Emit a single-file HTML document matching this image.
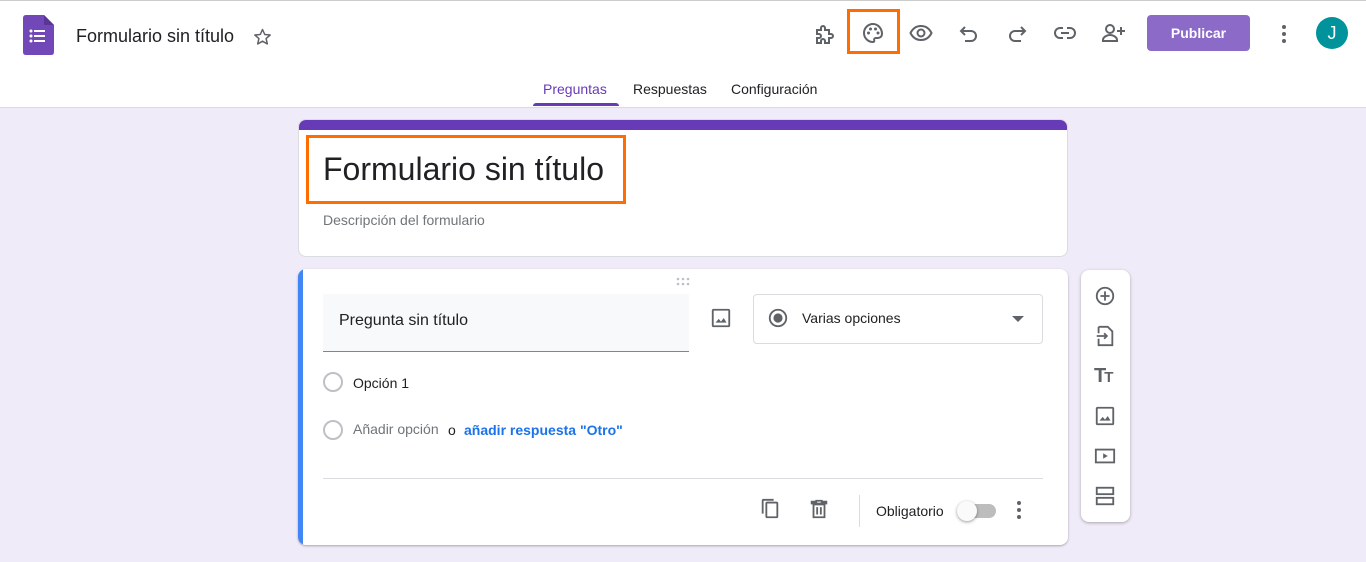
<!DOCTYPE html>
<html><head><meta charset="utf-8"><style>
*{box-sizing:border-box;margin:0;padding:0}
body{width:1366px;height:562px;background:#f0ebf8;font-family:"Liberation Sans",Arial,sans-serif;position:relative;overflow:hidden;color:#202124}
.abs{position:absolute}
svg{display:block}
</style></head><body>
<div class="abs" style="left:0;top:0;width:1366px;height:108px;background:#fff;border-top:1px solid #ccc;border-bottom:1px solid #dadce0"></div>
<svg class="abs" style="left:23px;top:15px" width="31" height="40" viewBox="0 0 31 40"><path d="M3 0H21L31 10V37Q31 40 28 40H3Q0 40 0 37V3Q0 0 3 0Z" fill="#7248b9"/><path d="M21 0L31 10H21Z" fill="#5a3596"/><g fill="#fff"><circle cx="8" cy="16" r="1.5"/><circle cx="8" cy="21" r="1.5"/><circle cx="8" cy="26" r="1.5"/><rect x="11" y="15" width="11" height="2"/><rect x="11" y="20" width="11" height="2"/><rect x="11" y="25" width="11" height="2"/></g></svg>
<div class="abs" style="left:76px;top:26px;font-size:18px">Formulario sin título</div>
<svg class="abs" style="left:252px;top:27px" width="21" height="20" viewBox="0 0 24 24"><path d="M12 3l2.7 6 6.5.6-4.9 4.3 1.5 6.4L12 17l-5.8 3.3 1.5-6.4L2.8 9.6 9.3 9z" fill="none" stroke="#5f6368" stroke-width="1.8" stroke-linejoin="round"/></svg>
<g></g>
<svg class="abs" style="left:813px;top:22px" width="24" height="24" viewBox="0 0 24 24"><path d="M4 8h4V6a2 2 0 014 0v2h4v4h2a2 2 0 010 4h-2v5H12v-2a2 2 0 00-4 0v2H4v-5h2a2 2 0 000-4H4z" fill="none" stroke="#5f6368" stroke-width="2"/></svg>
<div class="abs" style="left:847px;top:9px;width:53px;height:45px;border:3px solid #ff6d00"></div>
<svg class="abs" style="left:861px;top:21px" width="24" height="24" viewBox="0 0 24 24"><path d="M12 3a9 9 0 000 18c1.2 0 1.6-.8 1.2-1.6-.5-1 .2-2.4 1.5-2.4H17a4 4 0 004-4c0-5.5-4-10-9-10z" fill="none" stroke="#5f6368" stroke-width="2"/><g fill="#5f6368"><circle cx="7.5" cy="12" r="1.5"/><circle cx="9.5" cy="8" r="1.5"/><circle cx="14.5" cy="8" r="1.5"/><circle cx="17" cy="12" r="1.5"/></g></svg>
<svg class="abs" style="left:909px;top:21px" width="24" height="24" viewBox="0 0 24 24"><path d="M1.5 12C4 7 8 5 12 5s8 2 10.5 7c-2.5 5-6.5 7-10.5 7S4 17 1.5 12z" fill="none" stroke="#5f6368" stroke-width="2"/><circle cx="12" cy="12" r="3.5" fill="none" stroke="#5f6368" stroke-width="2"/></svg>
<svg class="abs" style="left:957px;top:21px" width="24" height="24" viewBox="0 0 24 24"><path d="M8 6L4 10l4 4M4 10h10a5 5 0 010 10H8" fill="none" stroke="#5f6368" stroke-width="2"/></svg>
<svg class="abs" style="left:1005px;top:21px" width="24" height="24" viewBox="0 0 24 24"><path d="M16 6l4 4-4 4M20 10H10a5 5 0 000 10h6" fill="none" stroke="#5f6368" stroke-width="2"/></svg>
<svg class="abs" style="left:1053px;top:21px" width="24" height="24" viewBox="0 0 24 24"><path d="M10 7H7a5 5 0 000 10h3M14 7h3a5 5 0 010 10h-3M8 12h8" fill="none" stroke="#5f6368" stroke-width="2"/></svg>
<svg class="abs" style="left:1101px;top:21px" width="26" height="24" viewBox="0 0 26 24"><circle cx="9" cy="8" r="4" fill="none" stroke="#5f6368" stroke-width="2"/><path d="M2 20v-1c0-3 4-5 7-5s7 2 7 5v1z" fill="none" stroke="#5f6368" stroke-width="2"/><path d="M20 6v8M16 10h8" stroke="#5f6368" stroke-width="2"/></svg>
<div class="abs" style="left:1147px;top:15px;width:103px;height:36px;background:#8c6ac7;border-radius:4px;color:#fff;font-weight:bold;font-size:14px;text-align:center;line-height:36px">Publicar</div>
<svg class="abs" style="left:1274px;top:22px" width="20" height="24" viewBox="0 0 20 24"><g fill="#5f6368"><circle cx="10" cy="5" r="2"/><circle cx="10" cy="12" r="2"/><circle cx="10" cy="19" r="2"/></g></svg>
<div class="abs" style="left:1316px;top:17px;width:32px;height:32px;border-radius:50%;background:#00939c;color:#fff;font-size:18px;text-align:center;line-height:32px">J</div>
<div class="abs" style="left:543px;top:81px;font-size:14px;color:#673ab7">Preguntas</div>
<div class="abs" style="left:533px;top:103px;width:86px;height:3px;background:#673ab7;border-radius:3px 3px 0 0"></div>
<div class="abs" style="left:633px;top:81px;font-size:14px;color:#202124">Respuestas</div>
<div class="abs" style="left:731px;top:81px;font-size:14px;color:#202124">Configuración</div>

<div class="abs" style="left:298px;top:119px;width:770px;height:138px;background:#fff;border-radius:8px;border:1px solid #dadce0;overflow:hidden"><div style="height:10px;background:#673ab7"></div></div>
<div class="abs" style="left:306px;top:135px;width:320px;height:69px;border:3px solid #ff6d00"></div>
<div class="abs" style="left:323px;top:151px;font-size:32px;color:#202124">Formulario sin título</div>
<div class="abs" style="left:323px;top:212px;font-size:14px;color:#70757a">Descripción del formulario</div>

<div class="abs" style="left:298px;top:269px;width:770px;height:276px;background:#fff;border-radius:8px;box-shadow:0 1px 2px rgba(0,0,0,.3);overflow:hidden"><div style="width:5px;height:100%;background:#4285f4"></div></div>
<svg class="abs" style="left:675px;top:277px" width="16" height="10"><g fill="#bdc1c6"><circle cx="3" cy="2" r="1.3"/><circle cx="8" cy="2" r="1.3"/><circle cx="13" cy="2" r="1.3"/><circle cx="3" cy="7" r="1.3"/><circle cx="8" cy="7" r="1.3"/><circle cx="13" cy="7" r="1.3"/></g></svg>
<div class="abs" style="left:323px;top:294px;width:366px;height:58px;background:#f8f9fa;border-bottom:1px solid #80868b"></div>
<div class="abs" style="left:339px;top:312px;font-size:16px">Pregunta sin título</div>
<svg class="abs" style="left:710px;top:307px" width="22" height="22" viewBox="0 0 24 24"><rect x="3" y="3" width="18" height="18" rx="1" fill="none" stroke="#5f6368" stroke-width="2"/><path d="M6 17l3.5-4 2.5 3 3-4 3 5z" fill="#5f6368"/></svg>
<div class="abs" style="left:753px;top:294px;width:290px;height:50px;border:1px solid #dadce0;border-radius:4px"></div>
<svg class="abs" style="left:767px;top:307px" width="22" height="22" viewBox="0 0 24 24"><circle cx="12" cy="12" r="9" fill="none" stroke="#5f6368" stroke-width="2"/><circle cx="12" cy="12" r="5" fill="#5f6368"/></svg>
<div class="abs" style="left:802px;top:310px;font-size:14px">Varias opciones</div>
<svg class="abs" style="left:1012px;top:316px" width="12" height="6"><path d="M0 0h12L6 6z" fill="#5f6368"/></svg>
<div class="abs" style="left:323px;top:372px;width:20px;height:20px;border:2px solid #bdc1c6;border-radius:50%"></div>
<div class="abs" style="left:353px;top:375px;font-size:14px">Opción 1</div>
<div class="abs" style="left:323px;top:420px;width:20px;height:20px;border:2px solid #bdc1c6;border-radius:50%"></div>
<div class="abs" style="left:353px;top:421px;font-size:14px;color:#70757a">Añadir opción</div>
<div class="abs" style="left:448px;top:422px;font-size:14px">o</div>
<div class="abs" style="left:464px;top:422px;font-size:14px;color:#1a73e8;font-weight:bold">añadir respuesta "Otro"</div>
<div class="abs" style="left:323px;top:478px;width:720px;height:1px;background:#dadce0"></div>
<svg class="abs" style="left:759px;top:498px" width="22" height="22" viewBox="0 0 24 24"><path d="M16 1H5a2 2 0 00-2 2v14h2V3h11z" fill="#5f6368"/><rect x="8" y="5" width="12" height="16" rx="1" fill="none" stroke="#5f6368" stroke-width="2"/></svg>
<svg class="abs" style="left:808px;top:498px" width="22" height="22" viewBox="0 0 24 24"><path d="M9 3h6v1h5v2H4V4h5zM6 7h12v14H6z" fill="none" stroke="#5f6368" stroke-width="2"/><path d="M10 10v8M14 10v8" stroke="#5f6368" stroke-width="2"/></svg>
<div class="abs" style="left:859px;top:495px;width:1px;height:32px;background:#dadce0"></div>
<div class="abs" style="left:876px;top:503px;font-size:14px">Obligatorio</div>
<div class="abs" style="left:960px;top:504px;width:36px;height:14px;border-radius:7px;background:#bdbdbd"></div>
<div class="abs" style="left:957px;top:501px;width:20px;height:20px;border-radius:50%;background:#fafafa;box-shadow:0 1px 3px rgba(0,0,0,.4)"></div>
<svg class="abs" style="left:1012px;top:499px" width="14" height="22"><g fill="#5f6368"><circle cx="7" cy="4" r="2"/><circle cx="7" cy="11" r="2"/><circle cx="7" cy="18" r="2"/></g></svg>

<div class="abs" style="left:1081px;top:270px;width:49px;height:252px;background:#fff;border-radius:8px;box-shadow:0 1px 3px rgba(0,0,0,.3)"></div>
<svg class="abs" style="left:1094px;top:285px" width="22" height="22" viewBox="0 0 24 24"><circle cx="12" cy="12" r="9" fill="none" stroke="#5f6368" stroke-width="2"/><path d="M12 7v10M7 12h10" stroke="#5f6368" stroke-width="2"/></svg>
<svg class="abs" style="left:1094px;top:325px" width="22" height="22" viewBox="0 0 24 24"><path d="M5 2h10l5 5v15H5v-7" fill="none" stroke="#5f6368" stroke-width="2"/><path d="M5 9v-7M3 12h11M11 9l3 3-3 3" fill="none" stroke="#5f6368" stroke-width="2"/></svg>
<div class="abs" style="left:1094px;top:365px;font-size:20px;font-weight:bold;color:#5f6368;letter-spacing:-2px">T<span style="font-size:15px">T</span></div>
<svg class="abs" style="left:1094px;top:405px" width="22" height="22" viewBox="0 0 24 24"><rect x="3" y="3" width="18" height="18" rx="1" fill="none" stroke="#5f6368" stroke-width="2"/><path d="M6 17l3.5-4 2.5 3 3-4 3 5z" fill="#5f6368"/></svg>
<svg class="abs" style="left:1094px;top:445px" width="22" height="22" viewBox="0 0 24 24"><rect x="2" y="5" width="20" height="14" fill="none" stroke="#5f6368" stroke-width="2"/><path d="M10 9v6l5-3z" fill="#5f6368"/></svg>
<svg class="abs" style="left:1094px;top:485px" width="22" height="22" viewBox="0 0 24 24"><rect x="3" y="3" width="18" height="7" fill="none" stroke="#5f6368" stroke-width="2"/><rect x="3" y="14" width="18" height="7" fill="none" stroke="#5f6368" stroke-width="2"/></svg>
</body></html>
